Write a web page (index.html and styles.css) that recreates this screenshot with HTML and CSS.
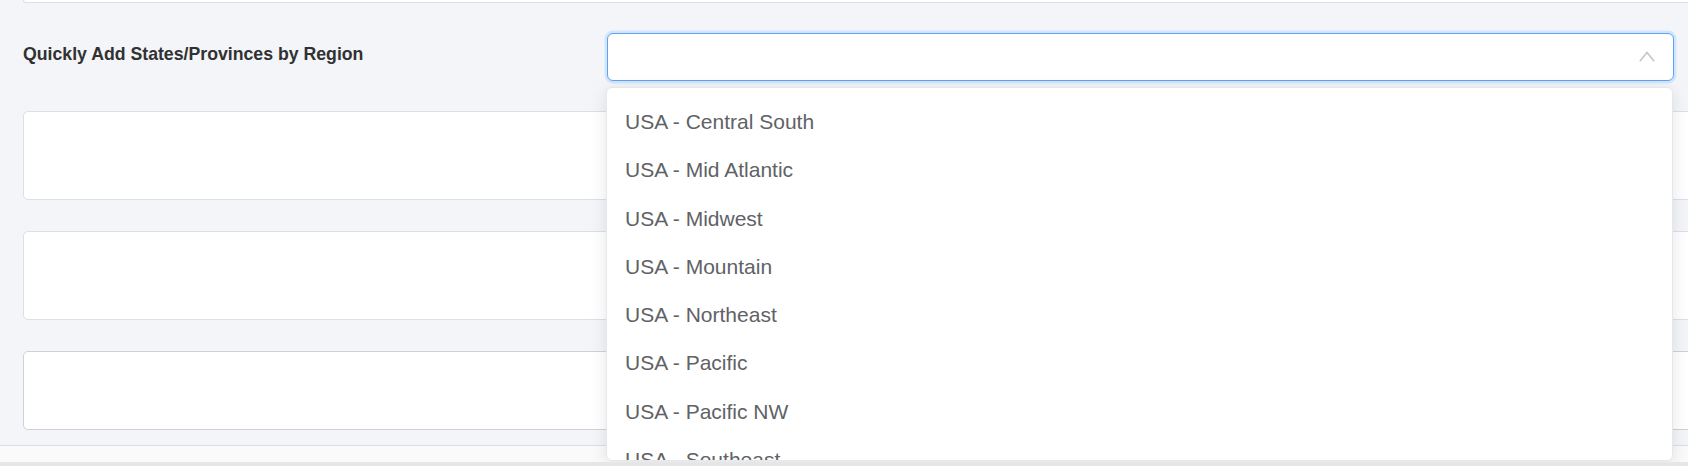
FILE: index.html
```html
<!DOCTYPE html>
<html lang="en">
<head>
<meta charset="utf-8">
<title>Quickly Add States/Provinces by Region</title>
<link rel="stylesheet" href="styles.css">
</head>
<body>
<div class="page">
  <div class="card card-top"></div>
  <div class="form-row">
    <label class="form-label">Quickly Add States/Provinces by Region</label>
    <div class="select is-focus">
      <span class="select-input"></span>
      <svg class="chevron" width="16" height="11" viewBox="0 0 16 11"><polyline points="0.8,10.2 8,1.5 15.2,10.2" fill="none" stroke="#c0c4cc" stroke-width="1.5"/></svg>
    </div>
  </div>
  <div class="card card-block"></div>
  <div class="card card-block"></div>
  <div class="card card-block card-dark"></div>
  <div class="footer-band"></div>
</div>
<div class="dropdown">
  <ul class="dropdown-list">
    <li class="dropdown-item">USA - Central South</li>
    <li class="dropdown-item">USA - Mid Atlantic</li>
    <li class="dropdown-item">USA - Midwest</li>
    <li class="dropdown-item">USA - Mountain</li>
    <li class="dropdown-item">USA - Northeast</li>
    <li class="dropdown-item">USA - Pacific</li>
    <li class="dropdown-item">USA - Pacific NW</li>
    <li class="dropdown-item">USA - Southeast</li>
    <li class="dropdown-item">USA - Southwest</li>
  </ul>
</div>
<div class="bottom-strip"></div>
</body>
</html>
```

FILE: styles.css
```css
html, body {
  margin: 0;
  padding: 0;
  height: 100%;
  overflow: hidden;
}
body {
  background: #f4f5f8;
  font-family: "Liberation Sans", Arial, Helvetica, sans-serif;
  position: relative;
}
.page {
  padding-left: 23px;
  margin-right: -60px;
}
.card {
  background: #ffffff;
  border: 1px solid #dcdfe6;
  border-radius: 5px;
}
.card-top {
  height: 2px;
  border-top: none;
  border-radius: 0 0 5px 5px;
}
.form-row {
  display: flex;
  align-items: flex-start;
  margin-top: 30px;
}
.form-label {
  flex: 0 0 584px;
  padding-top: 11px;
  font-size: 17.7px;
  line-height: 20px;
  font-weight: bold;
  color: #303133;
}
.select {
  flex: 0 0 auto;
  width: 1047px;
  height: 46px;
  border: 1px solid #5aa4f7;
  border-radius: 6px;
  background: #ffffff;
  box-shadow: 0 0 0 2.5px #d3e5fb;
  display: flex;
  align-items: center;
  justify-content: space-between;
  padding-right: 18px;
  box-sizing: content-box;
  margin-right: 74px;
}
.select-input {
  flex: 1;
}
.chevron {
  display: block;
  margin-top: -1px;
}
.card-block {
  height: 87px;
  margin-top: 31px;
}
.form-row + .card-block {
  margin-top: 30px;
}
.card-dark {
  height: 77px;
  border-color: #cfd1d6;
}
.footer-band {
  margin-top: 15px;
  margin-left: -23px;
  height: 16px;
  background: #fafafa;
  border-top: 1px solid #dcdfe6;
}
.dropdown {
  position: absolute;
  left: 606px;
  top: 87px;
  width: 1065px;
  height: 372px;
  background: #ffffff;
  border: 1px solid #e4e7ed;
  border-radius: 6px;
  box-shadow: 0 3px 17px rgba(0, 0, 0, 0.1);
  overflow: hidden;
  z-index: 10;
}
.dropdown-list {
  list-style: none;
  margin: 0;
  padding: 10px 0 0 0;
}
.dropdown-item {
  height: 48.3px;
  line-height: 48.3px;
  padding-left: 18px;
  font-size: 21px;
  color: #606266;
  white-space: nowrap;
}
.bottom-strip {
  position: absolute;
  left: 0;
  right: 0;
  bottom: 0;
  height: 4px;
  background: #e6e6e6;
  z-index: 20;
}
```
